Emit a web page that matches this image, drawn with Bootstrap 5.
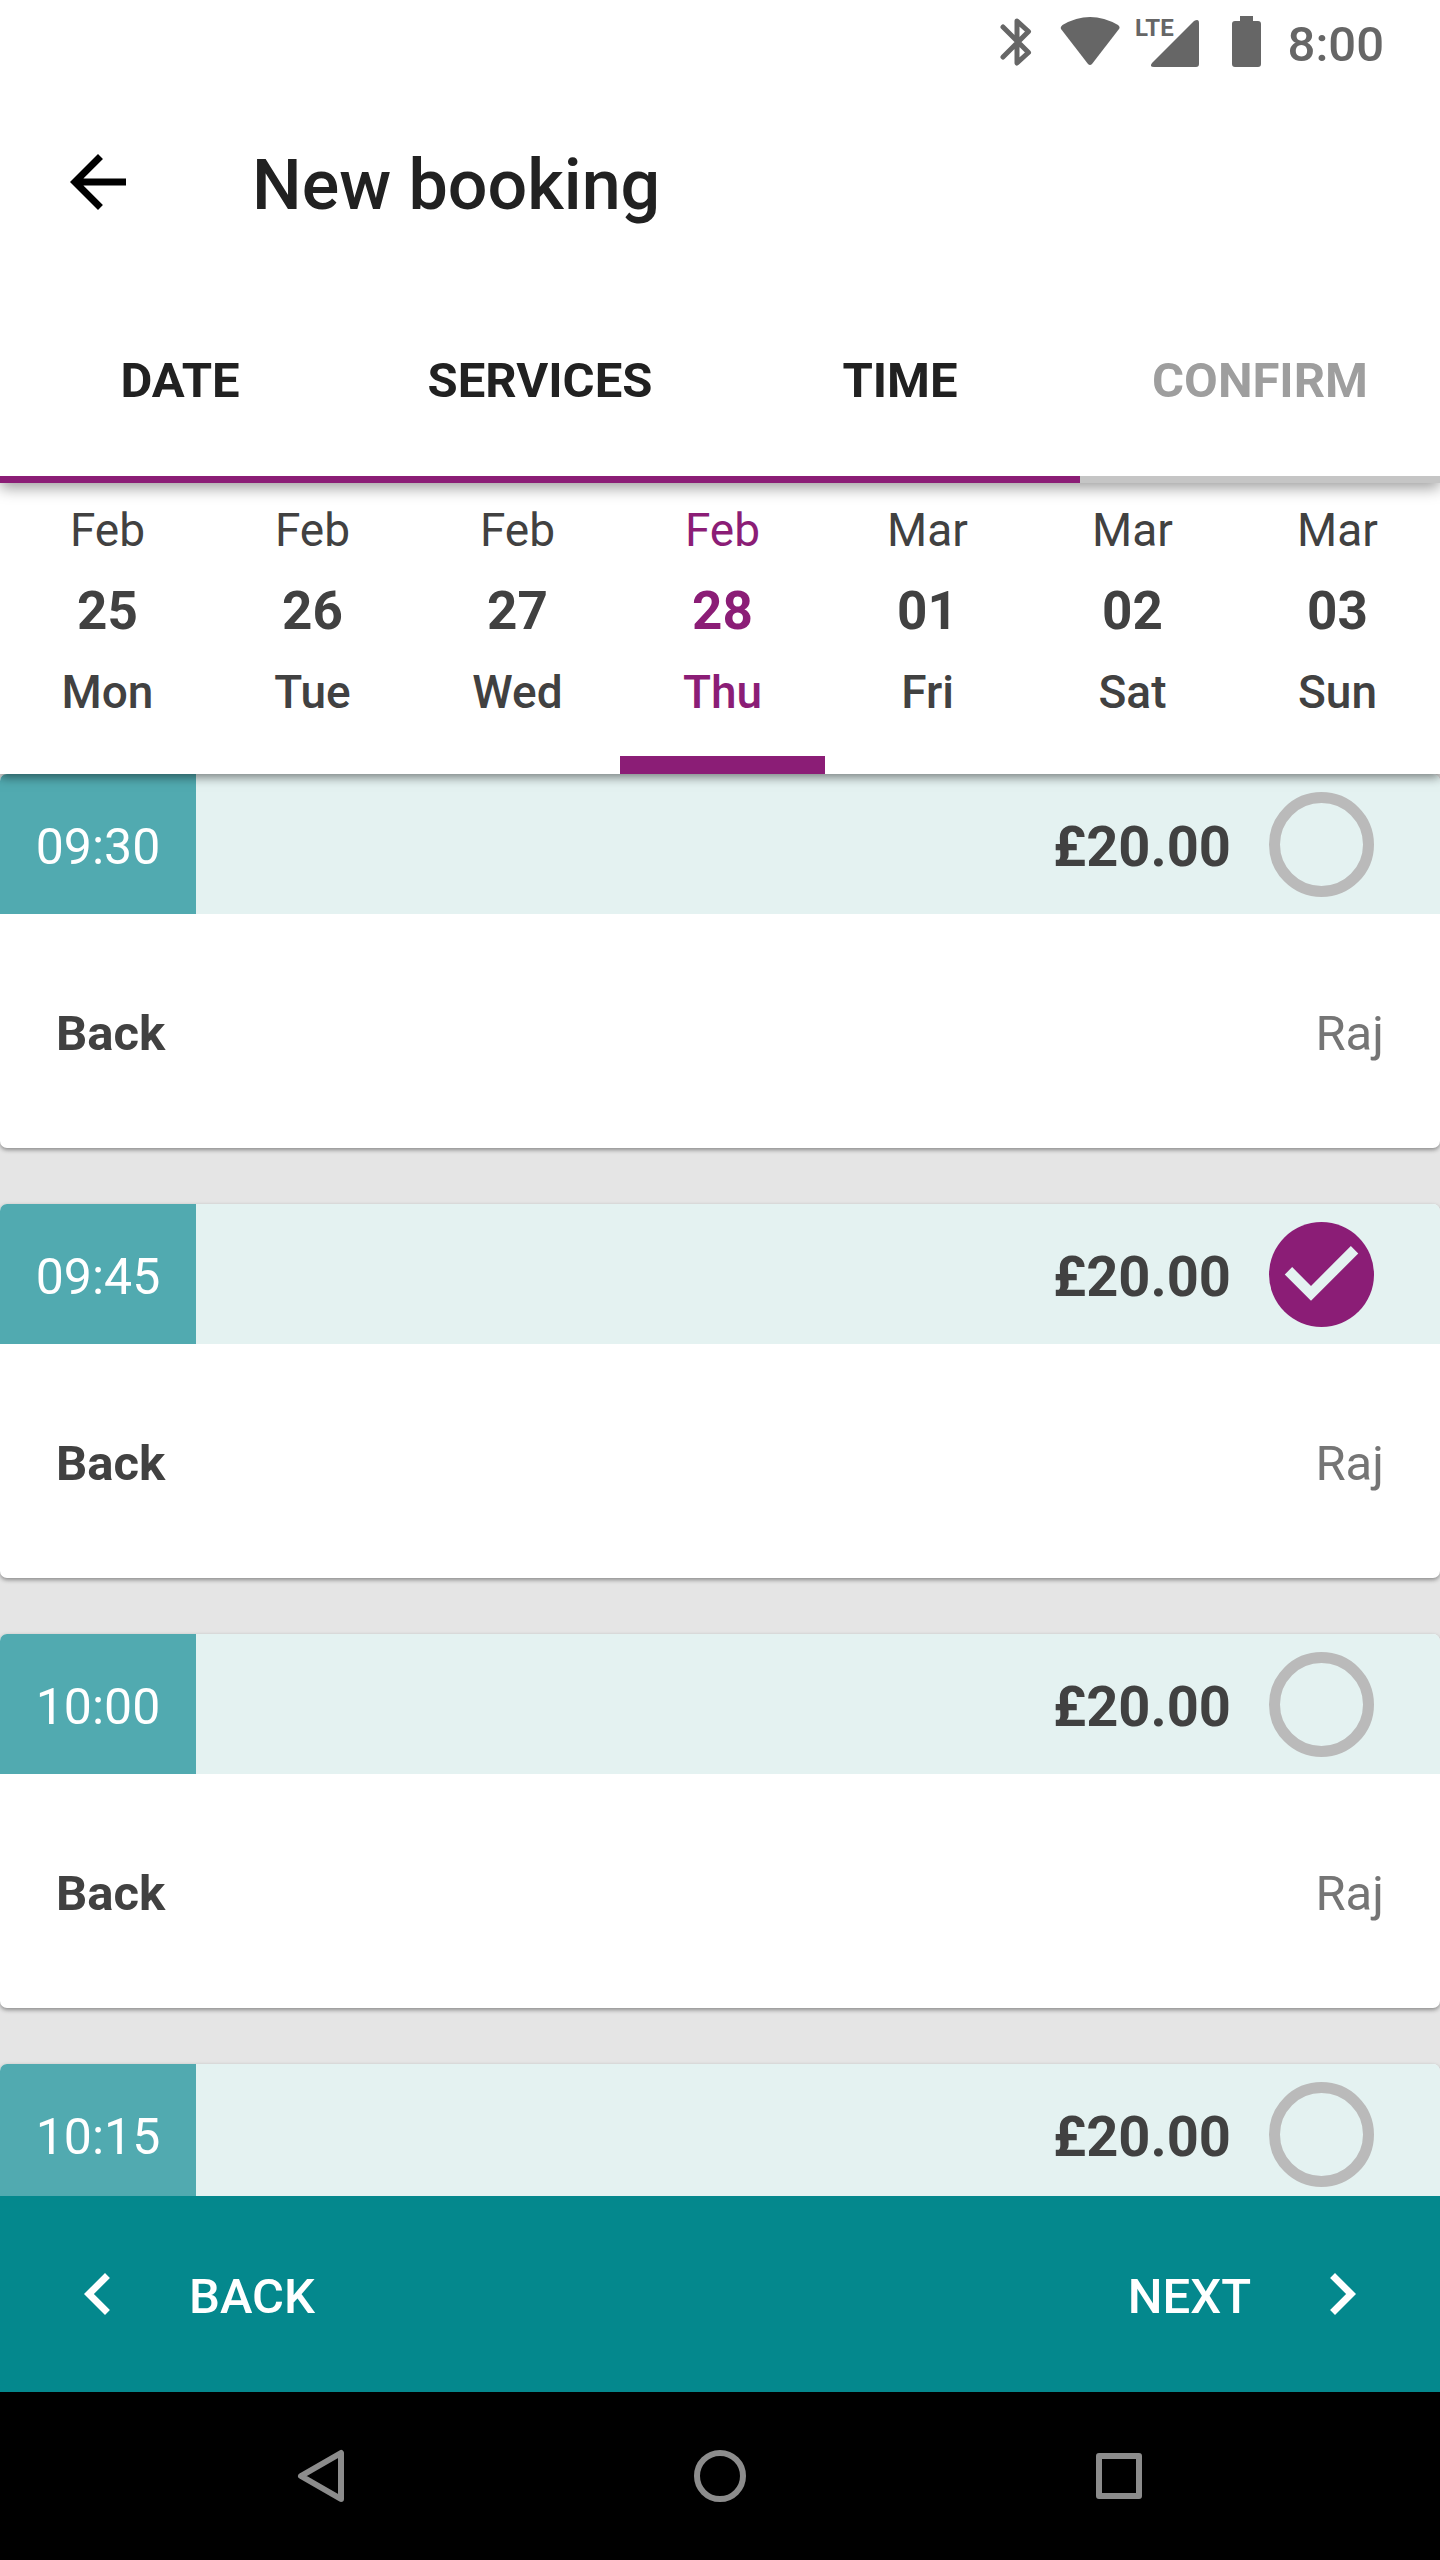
<!DOCTYPE html>
<html lang="en">
<head>
<meta charset="utf-8">
<meta name="viewport" content="width=device-width, initial-scale=1">
<title>New booking</title>
<link href="https://cdn.jsdelivr.net/npm/bootstrap@5.3.0/dist/css/bootstrap.min.css" rel="stylesheet">
<style>
  :root { --plum: #8b1d76; --teal: #04888d; --edge: 56px; }
  body { font-family: Roboto, "Noto Sans", sans-serif; font-size: 49px; line-height: 60px; color: #414141; background: #e5e5e5; }
  svg { display: block; flex: none; fill: currentColor; }
  .edge { padding-left: var(--edge); padding-right: var(--edge); }
  .medium { font-weight: 500; }
  /* Text is optically centred a little low inside its bar */
  .lowered { padding-top: 5px; }
  .plain { border: 0; background: none; color: inherit; padding: 0; font-weight: inherit; }
  .icon-24 { width: 84px; height: 84px; }

  .status { height: 84px; color: #666; }
  .status .clock { margin-left: 20px; }
  .lte { font-family: "Liberation Sans Narrow", Roboto, sans-serif; font-size: 24px; font-weight: 700; }
  .appbar { z-index: 3; box-shadow: 0 5px 14px rgba(0,0,0,.38); clip-path: inset(0 0 -30px 0); }
  .titlebar { height: 196px; gap: 112px; color: #212121; }
  .titlebar h1 { font-size: 70px; line-height: 84px; }
  .titlebar svg { color: #000; }
  .steps a { height: 203px; border-bottom: 7px solid var(--plum); color: #212121; }
  .steps a.todo { color: #9e9e9e; border-color: #c5c5c5; }

  .days { z-index: 2; padding-left: 5px; box-shadow: 0 3px 10px rgba(0,0,0,.5); clip-path: inset(0 0 -30px 0); }
  .days button { height: 291px; padding-top: 17px; border-bottom: 18px solid transparent; font-size: 46px; line-height: 60px; gap: 21px; font-weight: 400; }
  .days .num { font-size: 53px; font-weight: 700; }
  .days .picked { color: var(--plum); border-color: var(--plum); }

  .slots { flex: 1 1 0; min-height: 0; gap: 56px; }
  .slot { flex: none; border-radius: 7px; background: #fff; box-shadow: 0 2px 4px rgba(0,0,0,.4); }
  .slot-head { height: 140px; background: #e4f2f1; border-radius: 7px 7px 0 0; overflow: hidden; }
  .slot-time { width: 196px; background: #51aab0; color: #fff; font-size: 50px; }
  .slot-price { font-size: 56px; font-weight: 700; }
  .slot-body { height: 234px; }
  .staff { color: #757575; }
  .pick { width: 105px; height: 105px; margin: 0 66px 0 38px; border: 11px solid #bababa; background-color: transparent; }
  .pick.form-check-input:checked[type=radio] {
    border: 0; background-color: var(--plum); background-size: 100% 100%;
    background-image: url("data:image/svg+xml,%3Csvg xmlns='http://www.w3.org/2000/svg' viewBox='2 2 20 20'%3E%3Cpath fill='%23e4f2f1' d='M10 17l-5-5 1.41-1.41L10 14.17l7.59-7.59L19 8z'/%3E%3C/svg%3E");
  }

  .pager { z-index: 2; height: 196px; background: var(--teal); }
  .pager button { gap: 49px; }
  .sysnav { height: 168px; background: #000; color: #8c8c8c; padding: 0 122px; }
  .sysnav svg { fill: none; stroke: currentColor; stroke-width: 6; stroke-linejoin: round; }
</style>
</head>
<body class="vh-100 d-flex flex-column overflow-hidden">

<header class="appbar position-relative bg-white">
  <div class="status edge d-flex align-items-center justify-content-end">
    <svg width="32" height="52" viewBox="0 0 32 52" role="img" aria-label="Bluetooth"><path d="M3 11L28.500 36.500 17 47V5L28.500 15.500 3 41" fill="none" stroke="currentColor" stroke-width="5" stroke-linecap="round" stroke-linejoin="round"/></svg>
    <svg class="ms-4" width="68" height="52" viewBox="0 0 68 52" role="img" aria-label="Wi-Fi"><path d="M5 13Q4 11 6.500 9Q34-7 62 9Q64.500 11 63 13L36 48Q34 50 32 48z"/></svg>
    <svg class="ms-2" width="68" height="76" viewBox="0 -12 68 76" role="img" aria-label="LTE signal"><text class="lte" x="3" y="20">LTE</text><path d="M22 51Q17 51 20 47L62 5Q67 2 67 7V48Q67 51 64 51z"/></svg>
    <svg class="ms-4" width="44" height="52" viewBox="0 0 44 52" role="img" aria-label="Battery full"><path d="M16 0h13v5h5q3 0 3 3v40q0 3-3 3H11q-3 0-3-3V8q0-3 3-3h5z"/></svg>
    <span class="clock medium lowered">8:00</span>
  </div>
  <div class="titlebar edge d-flex align-items-center">
    <button class="plain" type="button" aria-label="Go back"><svg class="icon-24" viewBox="0 0 24 24"><path d="M20 11H7.830l5.590-5.590L12 4l-8 8 8 8 1.410-1.410L7.830 13H20z"/></svg></button>
    <h1 class="medium lowered mb-0">New booking</h1>
  </div>
  <nav class="steps d-flex fw-bold" aria-label="Booking steps">
    <a class="col-3 lowered d-flex align-items-center justify-content-center text-decoration-none" href="#date">DATE</a>
    <a class="col-3 lowered d-flex align-items-center justify-content-center text-decoration-none" href="#services">SERVICES</a>
    <a class="col-3 lowered d-flex align-items-center justify-content-center text-decoration-none" href="#time" aria-current="step">TIME</a>
    <a class="col-3 lowered d-flex align-items-center justify-content-center text-decoration-none todo" href="#confirm">CONFIRM</a>
  </nav>
</header>

<section class="days position-relative bg-white d-flex" aria-label="Day">
  <button type="button" class="plain col d-flex flex-column align-items-center"><span>Feb</span><span class="num">25</span><span class="medium">Mon</span></button>
  <button type="button" class="plain col d-flex flex-column align-items-center"><span>Feb</span><span class="num">26</span><span class="medium">Tue</span></button>
  <button type="button" class="plain col d-flex flex-column align-items-center"><span>Feb</span><span class="num">27</span><span class="medium">Wed</span></button>
  <button type="button" class="plain col d-flex flex-column align-items-center picked" aria-pressed="true"><span>Feb</span><span class="num">28</span><span class="medium">Thu</span></button>
  <button type="button" class="plain col d-flex flex-column align-items-center"><span>Mar</span><span class="num">01</span><span class="medium">Fri</span></button>
  <button type="button" class="plain col d-flex flex-column align-items-center"><span>Mar</span><span class="num">02</span><span class="medium">Sat</span></button>
  <button type="button" class="plain col d-flex flex-column align-items-center"><span>Mar</span><span class="num">03</span><span class="medium">Sun</span></button>
</section>

<main class="slots d-flex flex-column overflow-hidden">
  <article class="slot">
    <div class="slot-head d-flex align-items-center">
      <label for="slot-0930" class="slot-time lowered h-100 d-flex align-items-center justify-content-center">09:30</label>
      <span class="slot-price lowered ms-auto">£20.00</span>
      <input class="pick form-check-input flex-shrink-0" type="radio" name="slot" id="slot-0930">
    </div>
    <div class="slot-body edge lowered d-flex align-items-center justify-content-between"><span class="fw-bold">Back</span><span class="staff">Raj</span></div>
  </article>
  <article class="slot">
    <div class="slot-head d-flex align-items-center">
      <label for="slot-0945" class="slot-time lowered h-100 d-flex align-items-center justify-content-center">09:45</label>
      <span class="slot-price lowered ms-auto">£20.00</span>
      <input class="pick form-check-input flex-shrink-0" type="radio" name="slot" id="slot-0945" checked>
    </div>
    <div class="slot-body edge lowered d-flex align-items-center justify-content-between"><span class="fw-bold">Back</span><span class="staff">Raj</span></div>
  </article>
  <article class="slot">
    <div class="slot-head d-flex align-items-center">
      <label for="slot-1000" class="slot-time lowered h-100 d-flex align-items-center justify-content-center">10:00</label>
      <span class="slot-price lowered ms-auto">£20.00</span>
      <input class="pick form-check-input flex-shrink-0" type="radio" name="slot" id="slot-1000">
    </div>
    <div class="slot-body edge lowered d-flex align-items-center justify-content-between"><span class="fw-bold">Back</span><span class="staff">Raj</span></div>
  </article>
  <article class="slot">
    <div class="slot-head d-flex align-items-center">
      <label for="slot-1015" class="slot-time lowered h-100 d-flex align-items-center justify-content-center">10:15</label>
      <span class="slot-price lowered ms-auto">£20.00</span>
      <input class="pick form-check-input flex-shrink-0" type="radio" name="slot" id="slot-1015">
    </div>
  </article>
</main>

<footer class="position-relative">
  <div class="pager edge d-flex align-items-center justify-content-between text-white medium">
    <button type="button" class="plain d-flex align-items-center"><svg class="icon-24" viewBox="0 0 24 24" aria-hidden="true"><path d="M15.410 7.410L14 6l-6 6 6 6 1.410-1.410L10.830 12z"/></svg><span class="lowered">BACK</span></button>
    <button type="button" class="plain d-flex align-items-center"><span class="lowered">NEXT</span><svg class="icon-24" viewBox="0 0 24 24" aria-hidden="true"><path d="M10 6L8.590 7.410 13.170 12l-4.580 4.590L10 18l6-6z"/></svg></button>
  </div>
  <nav class="sysnav d-flex" aria-label="System">
    <button type="button" class="plain col d-flex align-items-center justify-content-center" aria-label="Back"><svg width="52" height="56" viewBox="0 0 52 56"><path d="M46 5V51L6 28z"/></svg></button>
    <button type="button" class="plain col d-flex align-items-center justify-content-center" aria-label="Home"><svg width="52" height="52" viewBox="0 0 52 52"><circle cx="26" cy="26" r="23"/></svg></button>
    <button type="button" class="plain col d-flex align-items-center justify-content-center" aria-label="Recent apps"><svg width="46" height="46" viewBox="0 0 46 46"><path d="M3 3H43V43H3z"/></svg></button>
  </nav>
</footer>

<script src="https://cdn.jsdelivr.net/npm/bootstrap@5.3.0/dist/js/bootstrap.bundle.min.js"></script>
</body>
</html>
